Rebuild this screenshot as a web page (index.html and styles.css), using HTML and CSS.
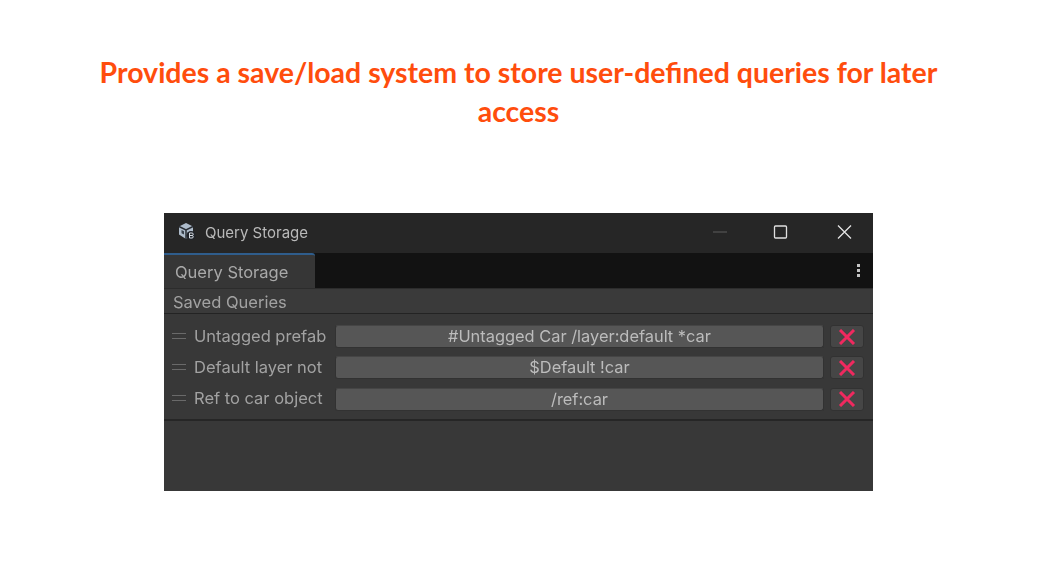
FILE: index.html
```html
<!DOCTYPE html>
<html lang="en">
<head>
<meta charset="utf-8">
<title>Query Storage</title>
<link rel="stylesheet" href="styles.css">
</head>
<body>
<h1 class="headline">Provides a save/load system to store user-defined queries for later access</h1>
<section class="window">
  <header class="titlebar">
    <svg class="app-icon" width="20" height="20" viewBox="0 0 20 20">
      <path d="M9 1l7 3.500v8L9 17l-7-4.500v-8z" fill="#aebccb"/>
      <path d="M2 4.500l7 3.500 7-3.500M9 8v9" stroke="#2a2f36" stroke-width="1.500" fill="none"/>
      <path d="M4.500 8l2.500 1.200v3.300l-2.500-1.200z" fill="#39424c"/>
      <circle cx="14" cy="13.500" r="4.500" fill="#20242a"/>
      <path d="M12.500 11h2.500a1 1 0 0 1 0 2.500h-2.500M15 13.500a1 1 0 0 1 0 2.500h-2.500v-5" stroke="#d5dbe2" stroke-width="1" fill="none"/>
    </svg>
    <span class="title">Query Storage</span>
    <div class="window-controls">
      <svg class="ctl-min" width="16" height="16" viewBox="0 0 16 16"><path d="M1 8h14" stroke="#5c5c5c" stroke-width="1"/></svg>
      <svg class="ctl-max" width="16" height="16" viewBox="0 0 16 16"><rect x="1.500" y="2" width="12" height="12" rx="1" fill="none" stroke="#e0e0e0" stroke-width="1.300"/></svg>
      <svg class="ctl-close" width="16" height="16" viewBox="0 0 16 16"><path d="M2 1.500l13 13M15 1.500l-13 13" stroke="#e4e4e4" stroke-width="1.300"/></svg>
    </div>
  </header>
  <div class="tabstrip">
    <div class="tab">Query Storage</div>
    <div class="kebab"><i></i><i></i><i></i></div>
  </div>
  <div class="panel">
    <div class="panel-head">Saved Queries</div>
    <div class="rows">
      <div class="row">
        <span class="grip"></span>
        <span class="name">Untagged prefab</span>
        <span class="query">#Untagged Car /layer:default *car</span>
        <span class="del"><svg width="18" height="16" viewBox="0 0 18 16"><path d="M2 1l14 14M16 1L2 15" stroke="#f0295f" stroke-width="3"/></svg></span>
      </div>
      <div class="row">
        <span class="grip"></span>
        <span class="name">Default layer not prefab</span>
        <span class="query">$Default !car</span>
        <span class="del"><svg width="18" height="16" viewBox="0 0 18 16"><path d="M2 1l14 14M16 1L2 15" stroke="#f0295f" stroke-width="3"/></svg></span>
      </div>
      <div class="row">
        <span class="grip"></span>
        <span class="name">Ref to car object</span>
        <span class="query">/ref:car</span>
        <span class="del"><svg width="18" height="16" viewBox="0 0 18 16"><path d="M2 1l14 14M16 1L2 15" stroke="#f0295f" stroke-width="3"/></svg></span>
      </div>
    </div>
  </div>
</section>
</body>
</html>
```
FILE: styles.css
```css
* { box-sizing: border-box; }
html, body { margin: 0; height: 100%; }
body {
  background: #fff;
  display: flex;
  flex-direction: column;
  align-items: center;
  font-family: "Inter", "Liberation Sans", sans-serif;
  overflow: hidden;
}
.headline {
  margin: 53px 0 0;
  width: 860px;
  height: 160px;
  text-align: center;
  font-family: "Lato", "Liberation Sans", sans-serif;
  font-weight: 700;
  font-size: 28.470px;
  line-height: 39px;
  color: #ff4d0d;
}
.window {
  width: 709px;
  height: 278px;
  background: #383838;
  display: flex;
  flex-direction: column;
  flex: none;
  filter: blur(0.6px);
}
.titlebar {
  height: 40px;
  background: #262626;
  display: flex;
  align-items: center;
  padding: 0 21px 2px 13px;
  color: #b9b9b9;
  font-size: 15px;
}
.app-icon { flex: none; }
.title { margin-left: 8px; }
.window-controls { margin-left: auto; display: flex; align-items: center; }
.ctl-min { margin-right: 45px; }
.ctl-max { margin-right: 47px; }
.tabstrip {
  height: 35px;
  background: #121212;
  display: flex;
  justify-content: space-between;
  align-items: center;
}
.tab {
  width: 151px;
  height: 100%;
  background: #363636;
  border-top: 2px solid #2f5d8c;
  border-top-right-radius: 3px;
  padding-left: 11px;
  line-height: 35px;
  font-size: 16.500px;
  color: #a9a9a9;
}
.kebab {
  display: flex;
  flex-direction: column;
  gap: 2px;
  margin: 0 13px 0 0;
}
.kebab i { width: 3px; height: 3px; background: #c4c4c4; display: block; }
.panel-head {
  height: 26px;
  background: #3a3a3a;
  border-top: 1px solid #2c2c2c;
  border-bottom: 1px solid #232323;
  padding-left: 9px;
  line-height: 26px;
  font-size: 16.500px;
  color: #a2a2a2;
}
.rows {
  height: 107px;
  padding: 11px 9px 0 0;
  border-bottom: 2px solid #262626;
  display: flex;
  flex-direction: column;
  gap: 8.300px;
}
.row {
  height: 23px;
  display: flex;
  align-items: center;
}
.grip {
  flex: none;
  width: 14px;
  height: 6px;
  margin: -2px 8px 0 8px;
  border-top: 1px solid #6a6a6a;
  border-bottom: 1px solid #6a6a6a;
}
.name {
  flex: none;
  width: 134px;
  margin: -2px 7px 0 0;
  overflow: hidden;
  white-space: nowrap;
  font-size: 16.500px;
  color: #a2a2a2;
}
.query {
  flex: none;
  width: 489px;
  height: 23px;
  margin-right: 6px;
  background: #565656;
  border: 1px solid #323232;
  border-top-color: #454545;
  border-radius: 3px;
  text-align: center;
  line-height: 20px;
  font-size: 16.400px;
  color: #bcbcbc;
}
.del {
  flex: none;
  width: 34px;
  height: 23px;
  background: #464646;
  border: 1px solid #323232;
  border-radius: 3px;
  display: flex;
  align-items: center;
  justify-content: center;
}
```
